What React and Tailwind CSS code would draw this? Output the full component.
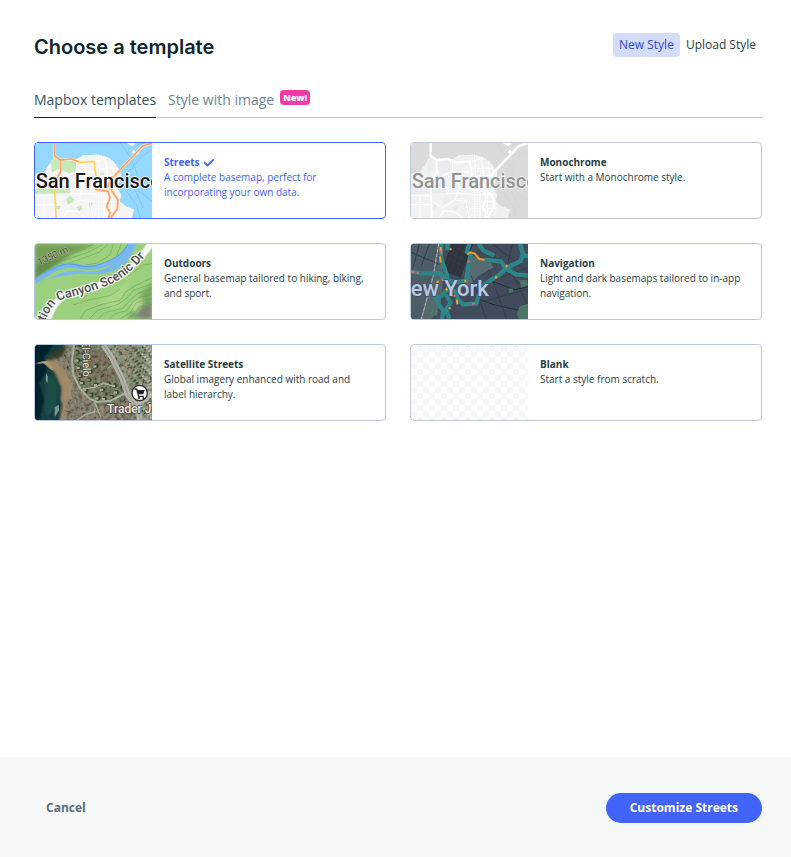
import React, { useState } from 'react';

const mapClass = 'block h-full w-full';
const mapFont = 'Roboto, sans-serif';

const SanFrancisco = ({ colors }) => (
  <svg viewBox="15 15 351 225" preserveAspectRatio="xMidYMid slice" className={mapClass} aria-hidden="true">
    <rect x="15" y="15" width="351" height="225" fill={colors.land} />
    <path d="M15 15H366V240H280L272 214L280 205L268 190L274 172L262 150L268 130L274 108L262 86L250 70L232 58L205 50L160 52L136 66L95 64L74 54L62 74L42 102L15 108Z" fill={colors.water} />
    <path d="M15 108L42 102L62 74L74 54L95 64L136 66L160 52L205 50L232 58L250 70L262 86L274 108L268 130L262 150L274 172L268 190L290 206L312 214L306 240H15Z" fill={colors.land} />
    <path d="M290 15H318L306 25ZM304 42l8-6 6 5 8-5 2 7-9 8-6-2Z" fill={colors.island} />
    <g fill={colors.park}>
      <path d="M62 70L74 54L94 66L138 68L142 98L118 106L84 92L66 104Z" />
      <path d="M15 153H108L120 150L120 166L15 167Z" />
      <path d="M108 184l12-10 14 8-6 10-14 8ZM140 208l14-6 4 12-12 6ZM78 204h14l-4 10H78Z" />
      <path d="M208 104h14v8h-14ZM178 192l10 4-4 12-8-4Z" />
    </g>
    <g fill="none" stroke={colors.minor} strokeWidth="3">
      <path d="M15 172H76V240M42 170V240M15 200H76M96 120L140 100L194 102M140 70V100L160 150L194 150M194 72L230 60M205 50L212 150M226 60L238 150M246 72L252 118M194 92L262 90M194 116L258 112M80 190L108 210L146 186L160 150M146 186L180 190L190 240M100 240L112 218L146 222L170 240M194 170H262M200 190H266M196 212H272M206 160V240M222 160V240M244 160V240M120 166L194 168" />
    </g>
    <g fill="none" stroke={colors.line} strokeWidth="2">
      <path d="M272 15L302 60L322 108L312 150L340 210M366 34L330 60L304 94L284 110M316 150L366 190M290 160L322 206L330 240M340 15L300 66" />
    </g>
    <g fill="none" strokeLinejoin="round">
      <path d="M74 15L74 54L92 66L124 63L148 72M92 66V100L80 124M366 15L338 24L240 128L232 150M196 154L234 160L240 180L230 206L240 224L236 240M240 128L246 160L264 186L262 212L242 240" stroke={colors.casing} strokeWidth="8" />
      <path d="M74 15L74 54L92 66L124 63L148 72M92 66V100L80 124M366 15L338 24L240 128L232 150M196 154L234 160L240 180L230 206L240 224L236 240M240 128L246 160L264 186L262 212L242 240" stroke={colors.highway} strokeWidth="5" />
      <path d="M144 74L192 70L198 114M74 150L78 240" stroke={colors.road} strokeWidth="5" />
    </g>
    <text x="17" y="151" fontFamily={mapFont} fontSize="60" fontWeight="500" fill={colors.text} stroke={colors.halo} strokeWidth="5" paintOrder="stroke">San Francisco</text>
  </svg>
);

const streetColors = {
  land: '#f5f3f3', water: '#94d8ff', island: '#f5f5f3', park: '#c7e9ba', minor: '#ffffff', line: '#79bdf3',
  casing: '#ffe5c8', highway: '#ffa565', road: '#ffd64d', text: '#171717', halo: '#ffffff',
};

const monoColors = {
  land: '#f0f1f3', water: '#dadada', island: '#ffffff', park: '#ebecef', minor: '#ffffff', line: '#d5d5d5',
  casing: '#f4f4f4', highway: '#ffffff', road: '#ffffff', text: '#929493', halo: '#f4f4f4',
};

const OutdoorsMap = () => (
  <svg viewBox="15 15 351 225" preserveAspectRatio="xMidYMid slice" className={mapClass} aria-hidden="true">
    <defs>
      <path id="canyon-road" d="M44 248C58 216 72 190 100 180C150 166 218 148 256 128C292 108 320 82 352 44" />
      <filter id="hill-shade"><feGaussianBlur stdDeviation="7" /></filter>
    </defs>
    <rect x="15" y="15" width="351" height="225" fill="#9bd17e" />
    <g filter="url(#hill-shade)">
      <path d="M15 15H202L150 36L80 66L15 112Z" fill="#749e56" />
      <path d="M15 84L60 60L120 50L15 122Z" fill="#628a49" />
      <path d="M292 240L318 182L366 130V240Z" fill="#78a660" />
      <path d="M332 210L366 188V240H320Z" fill="#817f78" />
      <path d="M205 188L262 152L302 126L258 214Z" fill="#abd78c" />
      <path d="M300 206L328 174L342 184L318 222Z" fill="#b5d996" />
    </g>
    <g fill="none" stroke="#6d9c50" strokeWidth="2" opacity="0.75">
      <path d="M15 80L54 66L112 50L160 30L190 15M15 98L60 76L126 56L180 38L220 15M15 110L70 86L142 64L206 40L236 15M150 82L202 72L240 48L250 15M180 84L222 76L258 54L274 15" />
      <path d="M150 240L168 214L216 196L270 184L286 160L312 142L366 116M178 240L202 214L260 198L290 178L310 154L366 134M206 240L222 222L278 208L300 184L322 164L366 148M238 240L252 226L292 214L308 190L328 176L366 164M270 240L302 220L318 192L342 184L366 180M294 240L316 220L328 204L366 196" />
      <path d="M128 198L180 182L240 170L270 150M310 100L340 78L366 74" />
    </g>
    <path d="M12 146C38 130 46 122 62 116C92 98 124 92 154 95C182 101 216 97 238 82C266 68 286 42 299 12H321C304 54 286 78 256 92C220 108 184 107 148 105C110 106 82 114 56 120C40 124 24 138 12 148Z" fill="#79b7ef" />
    <path d="M14 128C38 108 52 104 80 88C110 74 136 80 158 84C188 90 214 82 234 74C264 62 286 44 300 15" fill="none" stroke="#79b7ef" strokeWidth="14" />
    <path d="M14 122C38 100 50 100 80 84C108 70 136 76 158 82C190 84 214 76 234 66C264 54 284 36 293 15" fill="none" stroke="#528fd8" strokeWidth="2" />
    <path d="M50 250C64 214 74 188 100 172C150 154 218 142 256 118C292 98 330 62 366 10" fill="none" stroke="#d8e1cd" strokeWidth="22" />
    <path d="M50 250C64 214 74 188 100 172C150 154 218 142 256 118C292 98 330 62 366 10" fill="none" stroke="#f7f7f4" strokeWidth="16" />
    <text x="28" y="80" transform="rotate(-25 28 80)" fontFamily={mapFont} fontSize="29" fill="#4c523e" stroke="#a9bc90" strokeWidth="3" paintOrder="stroke">1350 m</text>
    <text fontFamily={mapFont} fontSize="38" fontWeight="500" fill="#4d504c" stroke="#f3f5ef" strokeWidth="7" paintOrder="stroke">
      <textPath href="#canyon-road">tion Canyon Scenic Dr</textPath>
    </text>
  </svg>
);

const NavigationMap = () => (
  <svg viewBox="15 15 351 225" preserveAspectRatio="xMidYMid slice" className={mapClass} aria-hidden="true">
    <rect x="15" y="15" width="351" height="225" fill="#414b5b" />
    <path d="M15 15H102L88 110L54 240H15ZM64 68L104 60L92 110L60 112Z" fill="#4e5c65" />
    <path d="M184 70L196 48L236 66L264 84L216 112L192 140H180Z" fill="#566c72" />
    <path d="M82 104L104 60L112 108L104 200L76 240H42Z" fill="#56686e" />
    <path d="M136 15H202L164 116L108 94Z" fill="#2f343e" />
    <g fill="none" stroke="#353e4b" strokeWidth="3">
      <path d="M196 110L240 240M248 92L302 240M306 76L366 200M180 150L366 86M178 202L366 150M224 15L366 160M260 15L366 100M320 15L300 90M15 40L100 76M40 15L20 90M70 15L46 80" />
      <path d="M194 140L256 126L326 152L366 144M208 176L260 196L338 214L366 230" stroke="#282e38" />
    </g>
    <g fill="none" stroke="#444b57" strokeWidth="1">
      <path d="M126 58L176 84M132 40L184 68M142 22L192 48M148 15L118 94M164 15L132 100M180 15L148 106" />
    </g>
    <path d="M366 194L342 202L332 226L340 240H366ZM340 122l22 2 4 14-20 8ZM308 150l12-2 2 10-12 4ZM74 208l22 8-4 14-20-4ZM248 66l10 10-10 8Z" fill="#4e7763" />
    <path d="M98 15L82 110L46 240" fill="none" stroke="#838e9e" strokeWidth="3" />
    <path d="M98 15L82 110L46 240" fill="none" stroke="#c0c5cf" strokeWidth="2" strokeDasharray="10 5" />
    <g fill="none" stroke="#2e8588" strokeWidth="13" strokeLinejoin="round">
      <path d="M106 15L104 56L122 106L128 146L108 170L88 180L112 216L108 240" />
      <path d="M15 98L50 103L102 103L124 126L156 130L180 124L190 66L194 46L182 38L190 15" />
      <path d="M218 15L232 34L264 50M236 62L286 68L298 88L330 106L366 110M366 52L350 48L344 66L302 86L280 108L256 122L228 142L210 194L172 196L156 182L150 158L120 146" />
      <path d="M342 15L352 48M130 240L120 212L134 190L120 168M124 15V34" />
    </g>
    <path d="M184 46L194 40L206 44L220 60L236 62" fill="none" stroke="#e79a27" strokeWidth="6" />
    <g fill="none" stroke="#f29c2c" strokeWidth="6">
      <path d="M104 24V40M102 52L104 70M152 182L154 196M92 132L98 126M268 118L272 112M299 84L304 78M178 122V130M128 208L134 208M134 28V34M120 148L124 154" />
    </g>
    <g fill="none" stroke="#e66663" strokeWidth="6">
      <path d="M106 34V46M16 98L26 98M32 101H38M188 64V72M198 194H206M142 168L148 172M108 120L112 126" />
    </g>
    <text x="14" y="170" fontFamily={mapFont} fontSize="66" fontWeight="500" fill="#b9c9e2" stroke="#44536a" strokeWidth="5" paintOrder="stroke">ew York</text>
  </svg>
);

const roofs = Array.from({ length: 260 }, (_, i) => ({
  x: 236 + ((i * 37) % 130),
  y: 16 + ((i * 59) % 223),
  fill: ['#c4bbab', '#55644d', '#9c8472', '#3f5139', '#a9b3a4', '#a87963', '#4d5f44'][i % 7],
})).filter((roof) => roof.x > 242 + roof.y * 0.4);

const houses = [[134, 34], [136, 58], [140, 80], [144, 104], [150, 126], [160, 146], [176, 162], [196, 172], [216, 174], [238, 168], [252, 154], [246, 134], [228, 128], [210, 146], [192, 132], [170, 116], [174, 92], [190, 76]];

const SatelliteMap = () => (
  <svg viewBox="15 15 351 225" preserveAspectRatio="xMidYMid slice" className={mapClass} aria-hidden="true">
    <defs>
      <filter id="ground" x="0" y="0" width="100%" height="100%">
        <feTurbulence type="fractalNoise" baseFrequency="0.09" numOctaves="3" seed="4" />
        <feColorMatrix values="1.6 0 0 0 -0.4 1.6 0 0 0 -0.4 1.4 0 0 0 -0.4 0 0 0 0 0.3" />
      </filter>
      <filter id="shore"><feGaussianBlur stdDeviation="3" /></filter>
    </defs>
    <rect x="15" y="15" width="351" height="225" fill="#6d6556" />
    <path d="M126 15H232L296 160L260 196H198L150 150L126 82Z" fill="#5a6349" />
    <path d="M176 46L224 32L258 104L238 128L196 116Z" fill="#625545" />
    <path d="M226 15H366V240H320L284 142Z" fill="#76806b" />
    <rect x="15" y="15" width="351" height="225" filter="url(#ground)" />
    <g filter="url(#shore)">
      <path d="M0 0H112L88 44L60 60L86 92L98 136L92 178L102 206L88 260H0Z" fill="#123c41" />
      <path d="M0 0H82L42 54L50 94L28 130L42 178L24 260H0Z" fill="#06242c" />
      <path d="M50 106L76 108L84 142L78 200L50 234L42 208Z" fill="#1d4d47" />
      <path d="M48 60L76 64L100 90L124 124L126 154L108 200L100 260H86L98 196L94 140L78 102Z" fill="#a08a68" />
      <path d="M112 15L96 50L60 60L42 56L78 34Z" fill="#34402c" />
    </g>
    <path d="M34 66l20-4 20 26-10 2-18-16Z" fill="#b49568" />
    <path d="M15 70l22-6 14 2-20 6ZM48 98l6 12-2 20-5-10ZM74 202l12-8 2 16-14 22Z" fill="#a6b9ae" opacity="0.7" />
    {roofs.map((roof, i) => (
      <rect key={i} x={roof.x} y={roof.y} width="7" height="5" fill={roof.fill} transform={`rotate(-24 ${roof.x} ${roof.y})`} />
    ))}
    {houses.map(([x, y], i) => (
      <g key={i}>
        <circle cx={x + 8} cy={y + 3} r="7" fill="#33482b" />
        <rect x={x} y={y} width="9" height="7" fill={i % 3 ? '#b4ab94' : '#a57a63'} />
      </g>
    ))}
    <g fill="none" stroke="#a7b19d" strokeWidth="6">
      <path d="M132 15L126 60L130 104L150 146L176 174L200 186L242 182L282 162L330 146L366 142" />
      <path d="M158 146L194 142L220 130L248 138M194 186L212 230M142 240L166 224L192 216L196 206" strokeWidth="4" />
      <path d="M232 86L246 74L266 82" strokeWidth="3" />
    </g>
    <path d="M100 46L132 108L118 160L124 184" fill="none" stroke="#a39d85" strokeWidth="2" />
    <path d="M220 15L246 54L276 114L294 166L324 206L330 240M366 160L318 198" fill="none" stroke="#b4b4ae" strokeWidth="16" />
    <path d="M220 15L246 54L276 114L294 166L324 206L330 240" fill="none" stroke="#817f7d" strokeWidth="2" />
    <text x="156" y="4" transform="rotate(88 156 4)" fontFamily={mapFont} fontSize="32" fill="#e8e7df" stroke="#4d4b41" strokeWidth="4" paintOrder="stroke">El-Cielo</text>
    <circle cx="329" cy="159" r="23" fill="#fff" stroke="#272727" strokeWidth="4" />
    <path d="M322 150H344L340 163H325Z" fill="#222" />
    <path d="M313 147H320L326 169H341" fill="none" stroke="#222" strokeWidth="4" />
    <circle cx="327" cy="174" r="3" fill="#222" />
    <circle cx="340" cy="174" r="3" fill="#222" />
    <text x="231" y="218" fontFamily={mapFont} fontSize="36" fontWeight="500" fill="#eee9e2" stroke="#4b4440" strokeWidth="4" paintOrder="stroke">Trader Joe’s</text>
  </svg>
);

const BlankMap = () => (
  <svg className={mapClass} aria-hidden="true">
    <defs>
      <pattern id="checker" width="12" height="12" patternUnits="userSpaceOnUse">
        <rect x="6" width="6" height="6" fill="#f3f7fd" />
        <rect y="6" width="6" height="6" fill="#f3f7fd" />
      </pattern>
    </defs>
    <rect width="100%" height="100%" fill="url(#checker)" />
  </svg>
);

const templates = [
  { name: 'Streets', text: 'A complete basemap, perfect for incorporating your own data.', map: <SanFrancisco colors={streetColors} /> },
  { name: 'Monochrome', text: 'Start with a Monochrome style.', map: <SanFrancisco colors={monoColors} /> },
  { name: 'Outdoors', text: 'General basemap tailored to hiking, biking, and sport.', map: <OutdoorsMap /> },
  { name: 'Navigation', text: 'Light and dark basemaps tailored to in-app navigation.', map: <NavigationMap /> },
  { name: 'Satellite Streets', text: 'Global imagery enhanced with road and label hierarchy.', map: <SatelliteMap /> },
  { name: 'Blank', text: 'Start a style from scratch.', map: <BlankMap /> },
];

const TemplateCard = ({ template, selected, onSelect }) => (
  <button
    type="button"
    aria-pressed={selected}
    onClick={onSelect}
    className={`flex min-h-[77px] overflow-hidden rounded border bg-white text-left ${selected ? 'border-[#4264fb] text-[#4264fb]' : 'border-[#b9c8dc] text-[#273d42]'}`}
  >
    <span className="h-[75px] w-[117px] shrink-0">{template.map}</span>
    <span className="block p-3 text-[10px] leading-[15px]">
      <span className="flex items-center gap-1 font-bold">
        {template.name}
        {selected && (
          <svg viewBox="0 0 10 8" className="h-2 w-[10px]" fill="none" stroke="currentColor" strokeWidth="1.8" aria-hidden="true">
            <path d="M0.7 3.8L3.5 6.5L9.3 0.8" strokeLinecap="round" strokeLinejoin="round" />
          </svg>
        )}
      </span>
      <span className="block">{template.text}</span>
    </span>
  </button>
);

const App = () => {
  const [selected, setSelected] = useState('Streets');
  const [mode, setMode] = useState('New Style');
  const [tab, setTab] = useState('templates');

  const tabClass = (id) =>
    `-mb-px flex h-9 items-start border-b pt-2 text-sm leading-5 ${tab === id ? 'border-[#0f262e] text-[#34515e]' : 'border-transparent text-[#6f8594]'}`;

  return (
    <div className="flex min-h-screen flex-col bg-white font-['Open_Sans',sans-serif] text-[#273d42]">
      <main className="flex-1 pt-[33px] pr-[29px] pb-6 pl-[34px]">
        <header className="flex items-start justify-between">
          <h1 className="pt-[3px] font-['Inter',sans-serif] text-xl leading-[22px] font-semibold text-[#0f262e]">Choose a template</h1>
          <div className="flex text-xs leading-6">
            {['New Style', 'Upload Style'].map((name) => (
              <button
                key={name}
                type="button"
                aria-pressed={mode === name}
                onClick={() => setMode(name)}
                className={`rounded px-[6px] ${mode === name ? 'bg-[#d3dcf8] text-[#314ccd]' : ''}`}
              >
                {name}
              </button>
            ))}
          </div>
        </header>

        <div role="tablist" className="mt-6 flex gap-3 border-b border-[#b9c8dc]">
          <button type="button" role="tab" aria-selected={tab === 'templates'} onClick={() => setTab('templates')} className={tabClass('templates')}>
            Mapbox templates
          </button>
          <button type="button" role="tab" aria-selected={tab === 'image'} onClick={() => setTab('image')} className={tabClass('image')}>
            Style with image
            <span className="ml-[6px] rounded bg-[#f23aa5] px-[3px] text-[9px] leading-[15px] font-extrabold text-white">New!</span>
          </button>
        </div>

        <div className="mt-6 grid grid-cols-2 gap-6">
          {templates.map((template) => (
            <TemplateCard
              key={template.name}
              template={template}
              selected={selected === template.name}
              onSelect={() => setSelected(template.name)}
            />
          ))}
        </div>
      </main>

      <footer className="flex items-center justify-between bg-[#f6f8f7] pt-9 pr-[29px] pb-[34px] pl-[34px] text-xs leading-[18px] font-bold">
        <button type="button" className="px-3 py-[5px] text-[#546c80]">Cancel</button>
        <button type="button" className="rounded-full bg-[#4264fb] px-6 py-[6px] text-white">
          Customize {selected}
        </button>
      </footer>
    </div>
  );
};

export default App;
